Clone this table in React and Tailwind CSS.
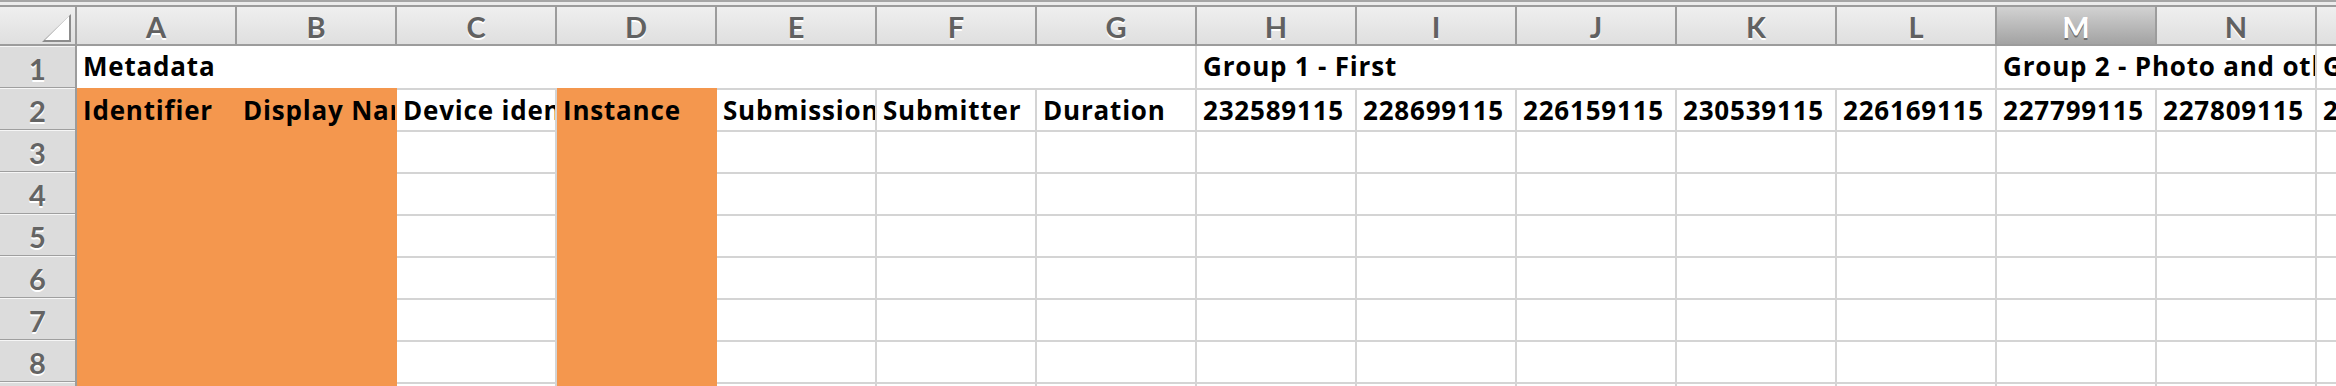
import React from "react";

const COLS = ["A", "B", "C", "D", "E", "F", "G", "H", "I", "J", "K", "L", "M", "N", "O"];
const SELECTED = "M";
const FILLED = ["A", "B", "D"];

const HEADERS = [
  "Identifier",
  "Display Name",
  "Device identifier",
  "Instance",
  "Submission Date",
  "Submitter",
  "Duration",
  "232589115",
  "228699115",
  "226159115",
  "230539115",
  "226169115",
  "227799115",
  "227809115",
  "227819115",
];

// merged cells on row 1
const GROUPS = [
  { span: 7, label: "Metadata" },
  { span: 5, label: "Group 1 - First" },
  { span: 2, label: "Group 2 - Photo and other" },
  { span: 1, label: "Group 3 - Location" },
];

const cellFont = "font-['Open_Sans',sans-serif] font-bold text-[26px] leading-none tracking-[0.8px] text-black";
const headFont = "font-['Lato',sans-serif] font-bold text-[29px] leading-none";

const Corner = () => (
  <div className="w-[77px] shrink-0 border-r-2 border-[#9c9c9c] bg-gradient-to-b from-[#efefef] to-[#dfdfdf]">
    <svg width="75" height="37" viewBox="0 0 75 37">
      <polygon points="42,35 71,7 71,35" fill="#8c8c8c" />
      <polygon points="45,33 69,9 69,33" fill="#ffffff" />
    </svg>
  </div>
);

const ColumnHeader = ({ letter }) => {
  const selected = letter === SELECTED;
  return (
    <div
      className={
        "w-[160px] shrink-0 border-r-2 border-[#9c9c9c] flex items-center justify-center " +
        (selected
          ? "bg-gradient-to-b from-[#d2d2d2] to-[#a3a3a3]"
          : "bg-gradient-to-b from-[#efefef] to-[#dfdfdf]")
      }
    >
      <span
        className={
          headFont +
          " pt-[2px] " +
          (selected
            ? "text-white [text-shadow:0_2px_0_#6e6e6e]"
            : "text-[#616161] [text-shadow:0_2px_0_#ffffff]")
        }
      >
        {letter}
      </span>
    </div>
  );
};

const RowHeader = ({ n }) => (
  <div className="h-[42px] flex items-center justify-center border-b border-[#9f9f9f] bg-[#dcdcdc] shadow-[inset_0_1px_0_#f6f6f6]">
    <span className={headFont + " pt-[3px] text-[#646464] [text-shadow:0_2px_0_#ffffff]"}>{n}</span>
  </div>
);

const Cell = ({ col, children, top }) => {
  const filled = FILLED.includes(col);
  return (
    <div
      className={
        "w-[160px] shrink-0 border-r-2 border-b-2 overflow-hidden whitespace-nowrap flex items-end pl-[6px] pb-[7px] " +
        (top ? "border-t-2 " : "") +
        (filled ? "bg-[#f4974e] border-[#f4974e]" : "bg-white border-[#d4d4d4]")
      }
    >
      {children && <span className={cellFont}>{children}</span>}
    </div>
  );
};

export default function App() {
  return (
    <div className="w-[2336px] h-[386px] overflow-hidden bg-white">
      {/* toolbar edge */}
      <div className="h-[7px] border-t-2 border-b-2 border-t-[#a6a6a6] border-b-[#9c9c9c] bg-[#ececec]" />

      {/* column letters */}
      <div className="flex h-[39px] border-b-2 border-[#9c9c9c]">
        <Corner />
        {COLS.map((c) => (
          <ColumnHeader key={c} letter={c} />
        ))}
      </div>

      <div className="flex">
        {/* row numbers */}
        <div className="w-[77px] shrink-0 flex flex-col border-r-2 border-[#9c9c9c]">
          {[1, 2, 3, 4, 5, 6, 7, 8, 9].map((n) => (
            <RowHeader key={n} n={n} />
          ))}
        </div>

        <div className="flex flex-col flex-1 overflow-hidden">
          {/* row 1: group titles */}
          <div className="flex h-[42px]">
            {GROUPS.map((g) => (
              <div
                key={g.label}
                style={{ width: g.span * 160 }}
                className="shrink-0 border-r-2 border-[#d4d4d4] overflow-hidden whitespace-nowrap flex items-end pl-[6px] pb-[9px]"
              >
                <span className={cellFont}>{g.label}</span>
              </div>
            ))}
          </div>

          {/* row 2: field names */}
          <div className="flex h-[44px]">
            {COLS.map((c, i) => (
              <Cell key={c} col={c} top>
                {HEADERS[i]}
              </Cell>
            ))}
          </div>

          {/* empty rows */}
          {[3, 4, 5, 6, 7, 8, 9].map((r) => (
            <div key={r} className="flex h-[42px]">
              {COLS.map((c) => (
                <Cell key={c} col={c} />
              ))}
            </div>
          ))}
        </div>
      </div>
    </div>
  );
}
